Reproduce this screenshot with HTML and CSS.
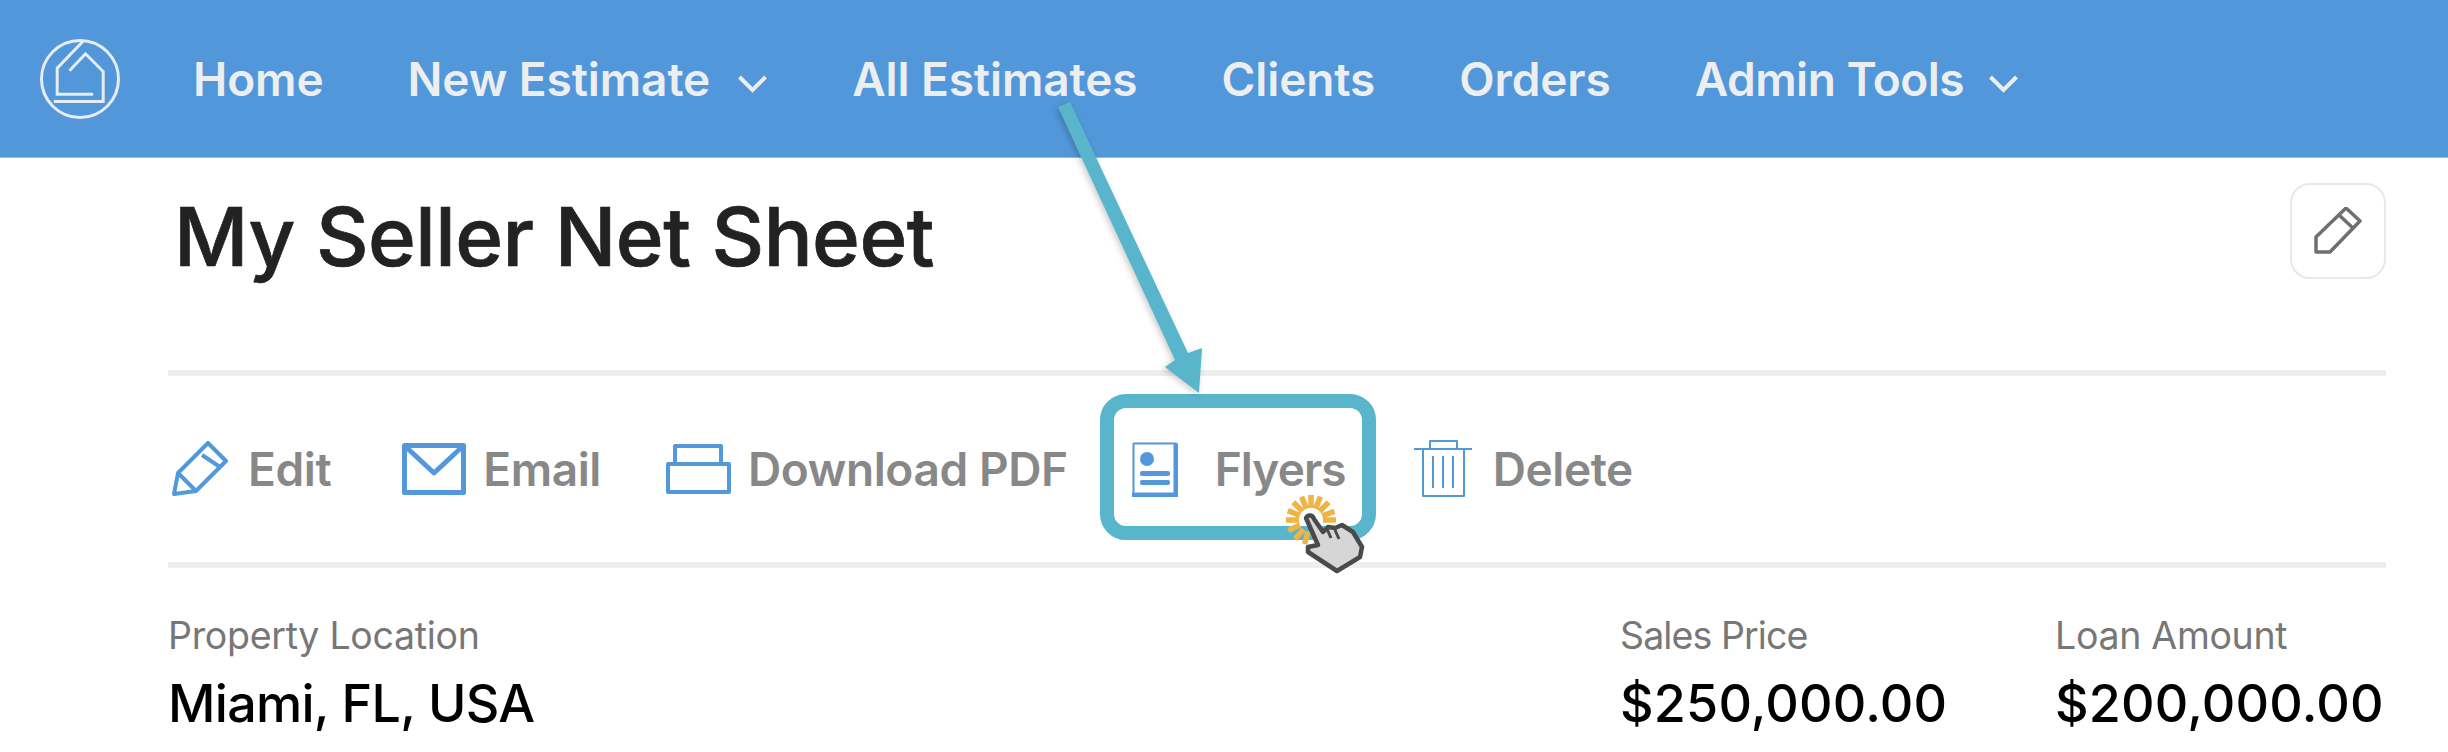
FILE: index.html
```html
<!DOCTYPE html>
<html lang="en">

<head>
	<meta charset="UTF-8">
	<meta name="viewport" content="width=device-width, initial-scale=1.0">
	<title>My Seller Net Sheet</title>
	<link rel="stylesheet" href="styles.css">
</head>

<body>

	<header class="topbar">
		<svg class="logo" viewBox="0 0 84 84">
			<circle cx="42" cy="42" r="38.5"></circle>
			<path d="M44.8 4.5 19.2 31.2V57.2H55.2"></path>
			<path d="M31.5 33.8 47.5 16.8 65.2 34.5V64.5H15.8"></path>
		</svg>
		<nav class="nav">
			<a class="nav-link">Home</a>
			<a class="nav-link">New Estimate
				<svg class="chevron" viewBox="0 0 30 18"><path d="M2 2 15 15 28 2"></path></svg>
			</a>
			<a class="nav-link">All Estimates</a>
			<a class="nav-link">Clients</a>
			<a class="nav-link">Orders</a>
			<a class="nav-link nav-admin">Admin Tools
				<svg class="chevron" viewBox="0 0 30 18"><path d="M2 2 15 15 28 2"></path></svg>
			</a>
		</nav>
	</header>

	<main class="sheet">
		<div class="title-row">
			<h1 class="title">My Seller Net Sheet</h1>
			<button class="edit-btn" type="button">
				<svg viewBox="0 0 48 48"><path d="M2 45V30L32 1 46 14 16 45ZM25 8 40 22"></path></svg>
			</button>
		</div>

		<div class="actions">
			<a class="action action-edit">
				<svg class="icon" width="56" height="56" viewBox="0 0 56 56">
					<path d="M2 53 6 32 36 2 54 20 24 50ZM6 32 24 50M30 14 48 26"></path>
				</svg>
				Edit
			</a>
			<a class="action action-email">
				<svg class="icon" width="64" height="52" viewBox="0 0 64 52">
					<rect class="thick" x="2.5" y="2.5" width="59" height="47"></rect>
					<path class="thick" d="M4 4 32 30 60 4"></path>
				</svg>
				Email
			</a>
			<a class="action action-pdf">
				<svg class="icon" width="65" height="50" viewBox="0 0 65 50">
					<path d="M9 20V2H55V20M2 20H63V48H2Z"></path>
				</svg>
				Download PDF
			</a>
			<a class="action action-flyers">
				<svg class="icon" width="46" height="55" viewBox="0 0 46 55">
					<path class="thin" d="M1.5 1.5H44.5V53.5H1.5Z"></path>
					<path class="thick" d="M0 53H46M44 2V53"></path>
					<circle class="fill" cx="15" cy="17" r="7"></circle>
					<rect class="fill" x="8" y="29" width="30" height="5" rx="2"></rect>
					<rect class="fill" x="8" y="38" width="30" height="5" rx="2"></rect>
				</svg>
				Flyers
			</a>
			<a class="action action-delete">
				<svg class="icon" width="58" height="58" viewBox="0 0 58 58">
					<path class="thin" d="M0 9H58M16 9V1H43V9M9 9V56H50V9M19 16V48M29 16V48M39 16V48"></path>
				</svg>
				Delete
			</a>
		</div>

		<div class="stats">
			<div class="stat">
				<div class="stat-label">Property Location</div>
				<div class="stat-value">Miami, FL, USA</div>
			</div>
			<div class="stat">
				<div class="stat-label stat-label-tight">Sales Price</div>
				<div class="stat-value stat-money">$250,000.00</div>
			</div>
			<div class="stat">
				<div class="stat-label">Loan Amount</div>
				<div class="stat-value stat-money">$200,000.00</div>
			</div>
		</div>
	</main>

	<!-- arrow and pointer drawn over the page -->
	<svg class="callout" viewBox="0 0 2448 752">
		<path class="arrow" d="M1058 107 1070 102 1188 353 1202 348 1199 393 1165 367 1175 360Z"></path>
		<path class="rays" d="M1323 520H1336M1322.3 515.9 1334.5 511.4M1319.5 511.5 1328.7 502.3M1315.5 508.9 1320.4 496.8M1311 508V495M1306.5 508.9 1301.6 496.8M1302.5 511.5 1293.3 502.3M1299.9 515.5 1287.8 510.6M1299 520H1286M1300 525 1288.3 530.6M1303.3 529.2 1295 539.2M1308 531.6 1304.5 544.1"></path>
		<path class="hand" d="M1306 518C1308 514 1313 515 1314 519L1323 532 1328 527 1335 528 1342 525 1353 532 1362 547 1360 557 1337 571 1308 552 1308 547 1318 545Z"></path>
		<path class="hand-line" d="M1327 529 1331 538M1335 530 1339 539"></path>
	</svg>

</body>

</html>
```

FILE: styles.css
```css
* {
	box-sizing: border-box;
}

html,
body {
	height: 100%;
}

body {
	margin: 0;
	overflow: hidden;
	position: relative;
	background-color: #fff;
	font-family: Inter, "Liberation Sans", sans-serif;
}

.topbar {
	display: flex;
	align-items: center;
	height: 158px;
	padding-left: 38px;
	background-color: #5297d9;
	border-bottom: 1px solid #8fbde8;
}

.logo {
	width: 84px;
	height: 84px;
	margin-right: 71px;
	fill: none;
	stroke: #e6ecf1;
	stroke-width: 3;
}

.nav {
	display: flex;
	align-items: center;
	gap: 84px;
}

.nav-link {
	display: flex;
	align-items: center;
	gap: 27px;
	font-size: 46px;
	font-weight: 600;
	letter-spacing: -0.1px;
	color: #eceef0;
}

.nav-admin {
	gap: 24px;
	letter-spacing: -0.5px;
}

.chevron {
	width: 31px;
	height: 18px;
	margin-top: 10px;
	fill: none;
	stroke: #eceef0;
	stroke-width: 4;
}

.sheet {
	padding: 0 62px 0 168px;
}

.title-row {
	display: flex;
	align-items: flex-start;
	justify-content: space-between;
	height: 218px;
	padding-top: 25px;
	border-bottom: 6px solid #eee;
}

.title {
	margin: 5px 0 0 6px;
	font-size: 81.5px;
	font-weight: 500;
	line-height: 97px;
	letter-spacing: -0.55px;
	color: #222;
	-webkit-text-stroke: 0.7px #222;
}

.edit-btn {
	display: flex;
	align-items: center;
	justify-content: center;
	width: 96px;
	height: 96px;
	padding: 0;
	background: #fff;
	border: 2px solid #e8e8e8;
	border-radius: 20px;
}

.edit-btn svg {
	width: 48px;
	height: 48px;
	fill: none;
	stroke: #6f6f6f;
	stroke-width: 3.5;
	stroke-linejoin: round;
}

.actions {
	display: flex;
	align-items: center;
	height: 192px;
	padding-left: 4px;
	border-bottom: 6px solid #eee;
}

.action {
	display: flex;
	align-items: center;
	font-size: 46px;
	font-weight: 600;
	letter-spacing: -0.4px;
	color: #888;
}

.icon {
	flex: none;
	fill: none;
	stroke: #5298da;
	stroke-width: 4;
	stroke-linejoin: round;
}

.icon .thick {
	stroke-width: 5;
}

.icon .thin {
	stroke-width: 2;
}

.icon .fill {
	fill: #5298da;
	stroke: none;
}

.action-edit {
	gap: 20px;
}

.action-email {
	gap: 17px;
	margin-left: 71px;
}

.action-pdf {
	gap: 17px;
	margin-left: 65px;
}

.action-flyers {
	gap: 37px;
	height: 146px;
	margin: 0 0 4px 32px;
	padding: 4px 16px 0 18px;
	border: 14px solid #58b5cc;
	border-radius: 26px;
	letter-spacing: -0.9px;
}

.action-delete {
	gap: 21px;
	margin-left: 38px;
}

.stats {
	display: grid;
	grid-template-columns: 1fr 435px 331px;
	padding-top: 46px;
}

.stat-label {
	font-size: 37.5px;
	line-height: 44px;
	letter-spacing: -0.3px;
	color: #777;
}

.stat-label-tight {
	letter-spacing: -0.9px;
}

.stat-value {
	margin-top: 16px;
	font-size: 52px;
	font-weight: 500;
	line-height: 60px;
	letter-spacing: -0.7px;
	color: #000;
}

.stat-money {
	letter-spacing: 0.2px;
}

.callout {
	position: absolute;
	top: 0;
	left: 0;
	width: 2448px;
	height: 752px;
}

.arrow {
	fill: #58b5cc;
	filter: drop-shadow(-2px 2px 3px rgba(0, 0, 0, 0.2));
}

.rays {
	fill: none;
	stroke: #efb444;
	stroke-width: 5.5;
}

.hand {
	fill: #d6d6d6;
	stroke: #4a4a4a;
	stroke-width: 4.5;
	stroke-linejoin: round;
}

.hand-line {
	fill: none;
	stroke: #4a4a4a;
	stroke-width: 3;
}
```
